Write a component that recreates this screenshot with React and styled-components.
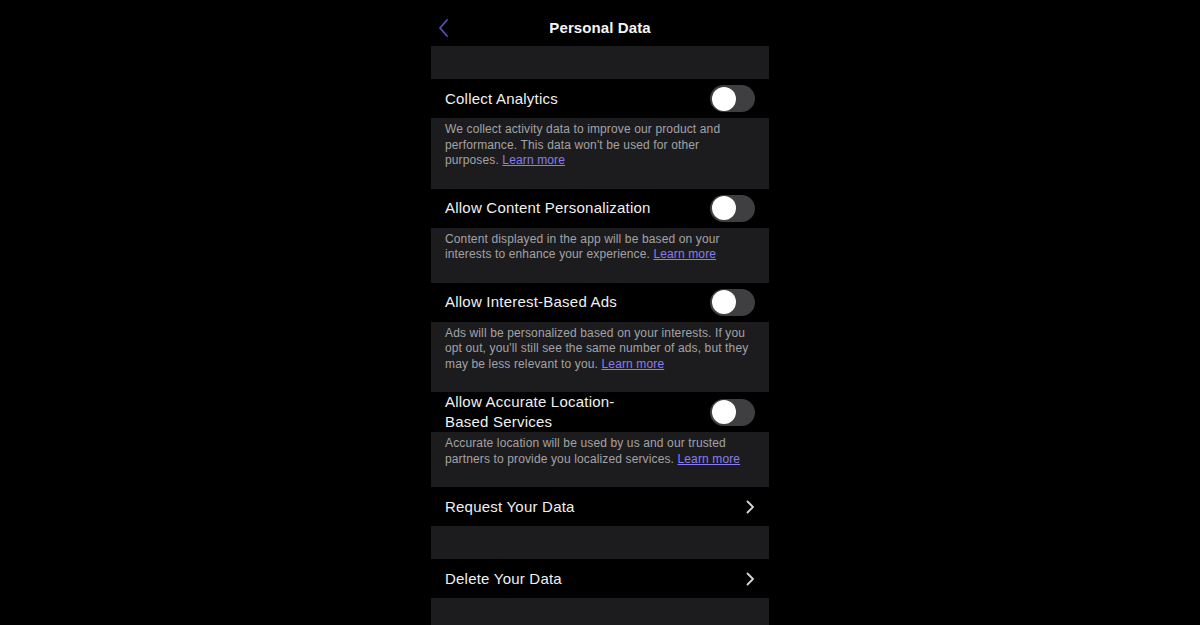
import React from "react";
import styled, { createGlobalStyle } from "styled-components";

const Global = createGlobalStyle`
  html, body { margin: 0; padding: 0; background: #000; }
  body { font-family: "Liberation Sans", "Helvetica Neue", Arial, sans-serif; -webkit-font-smoothing: antialiased; }
`;

const Page = styled.div`
  width: 100%;
  height: 625px;
  background: #000;
  display: flex;
  justify-content: center;
  overflow: hidden;
`;

const Screen = styled.div`
  width: 338px;
  display: flex;
  flex-direction: column;
  background: #000;
`;

const Header = styled.header`
  height: 46px;
  box-sizing: border-box;
  padding-top: 8px;
  display: grid;
  grid-template-columns: 40px 1fr 40px;
  align-items: center;
`;

const Back = styled.button`
  background: none;
  border: 0;
  padding: 2px 0 0 6px;
  display: flex;
  align-items: center;
  cursor: pointer;
`;

const Title = styled.h1`
  margin: 0;
  text-align: center;
  color: #f5f5f5;
  font-size: 15px;
  font-weight: 700;
  letter-spacing: 0.1px;
`;

const Band = styled.div`
  height: 33px;
  background: #1c1c1e;
  flex: ${(p) => (p.$grow ? 1 : "none")};
`;

const Row = styled.div`
  min-height: 39px;
  display: flex;
  align-items: center;
  justify-content: space-between;
  padding: 0 14px;
  background: #000;
`;

const Label = styled.span`
  color: #f0f0f0;
  font-size: 15px;
  line-height: 20px;
  letter-spacing: 0.22px;
  max-width: ${(p) => (p.$narrow ? "190px" : "none")};
`;

const Desc = styled.p`
  margin: 0;
  background: #1c1c1e;
  color: #a3a3a6;
  font-size: 12px;
  line-height: 15.5px;
  letter-spacing: 0.13px;
  padding: 4px 14px 20px;
`;

const Link = styled.a`
  color: #8a7cf2;
  text-decoration: underline;
  text-underline-offset: 1px;
`;

const Track = styled.span`
  width: 45px;
  height: 27px;
  border-radius: 14px;
  background: #3f3f42;
  flex: none;
  display: flex;
  align-items: center;
  padding: 0 2px;
  box-sizing: border-box;
`;

const Knob = styled.span`
  width: 24px;
  height: 24px;
  border-radius: 50%;
  background: #fff;
`;

const Toggle = () => (
  <Track>
    <Knob />
  </Track>
);

const Chevron = () => (
  <svg width="10" height="14" viewBox="0 0 10 14" fill="none">
    <path d="M2.5 1.5 L8 7 L2.5 12.5" stroke="#d6d6d6" strokeWidth="1.8" strokeLinecap="round" strokeLinejoin="round" />
  </svg>
);

const BackIcon = () => (
  <svg width="14" height="20" viewBox="0 0 14 20" fill="none">
    <path d="M10 2 L3 10 L10 18" stroke="#5b50b8" strokeWidth="1.8" strokeLinecap="round" strokeLinejoin="round" />
  </svg>
);

const settings = [
  {
    title: "Collect Analytics",
    text: "We collect activity data to improve our product and performance. This data won't be used for other purposes.",
  },
  {
    title: "Allow Content Personalization",
    text: "Content displayed in the app will be based on your interests to enhance your experience.",
  },
  {
    title: "Allow Interest-Based Ads",
    text: "Ads will be personalized based on your interests. If you opt out, you'll still see the same number of ads, but they may be less relevant to you.",
  },
  {
    title: "Allow Accurate Location-Based Services",
    narrow: true,
    text: "Accurate location will be used by us and our trusted partners to provide you localized services.",
  },
];

export default function App() {
  return (
    <>
      <Global />
      <Page>
        <Screen>
          <Header>
            <Back aria-label="Back">
              <BackIcon />
            </Back>
            <Title>Personal Data</Title>
            <span />
          </Header>
          <Band />
          {settings.map((s) => (
            <React.Fragment key={s.title}>
              <Row>
                <Label $narrow={s.narrow}>{s.title}</Label>
                <Toggle />
              </Row>
              <Desc>
                {s.text} <Link>Learn more</Link>
              </Desc>
            </React.Fragment>
          ))}
          <Row>
            <Label>Request Your Data</Label>
            <Chevron />
          </Row>
          <Band />
          <Row>
            <Label>Delete Your Data</Label>
            <Chevron />
          </Row>
          <Band $grow />
        </Screen>
      </Page>
    </>
  );
}
